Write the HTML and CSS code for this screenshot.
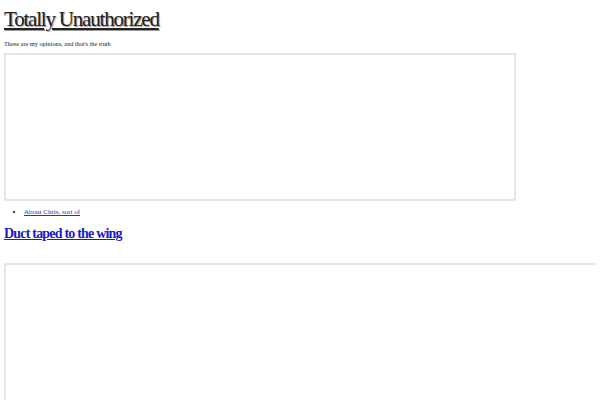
FILE: index.html
```html
<!DOCTYPE html>
<html lang="en">

<head>
    <meta charset="UTF-8">
    <title>Totally Unauthorized</title>
    <link rel="stylesheet" href="styles.css">
</head>

<body>
    <div class="header">
        <h1 class="blog-title"><a href="#">Totally Unauthorized</a></h1>
        <p class="blog-desc">These are my opinions, and that's the truth</p>
    </div>

    <div class="frame frame-top"></div>

    <ul class="pages">
        <li><a href="#">About Chris, sort of</a></li>
    </ul>

    <h2 class="post-title"><a href="#">Duct taped to the wing</a></h2>

    <div class="frame frame-post"></div>
</body>

</html>
```

FILE: styles.css
```css
html {
    overflow: hidden;
}

body {
    margin: 0 4px;
    font-family: "Liberation Serif", serif;
    background-color: #fff;
}

.header {
    padding-top: 8px;
}

.blog-title {
    margin: 0;
    font-size: 21px;
    font-weight: normal;
    line-height: 22px;
    letter-spacing: -1.2px;
}

.blog-title a {
    color: #222;
    text-shadow: 1px 1px 1px #999;
}

.blog-desc {
    margin: 9px 0 0;
    font-size: 6.3px;
    line-height: 9px;
    color: #222;
}

.frame {
    border: 2px solid #e6e6e6;
    box-sizing: border-box;
}

.frame-top {
    width: 512px;
    height: 148px;
    margin-top: 5px;
}

.pages {
    margin: 6px 0 0;
    padding-left: 20px;
    font-size: 7px;
    line-height: 10px;
}

.pages a {
    color: #2233cc;
}

.post-title {
    margin: 8px 0 0;
    font-size: 14px;
    line-height: 18px;
    letter-spacing: -0.8px;
}

.post-title a {
    color: #1a1acc;
}

.frame-post {
    width: 700px;
    height: 300px;
    margin-top: 20px;
}
```
